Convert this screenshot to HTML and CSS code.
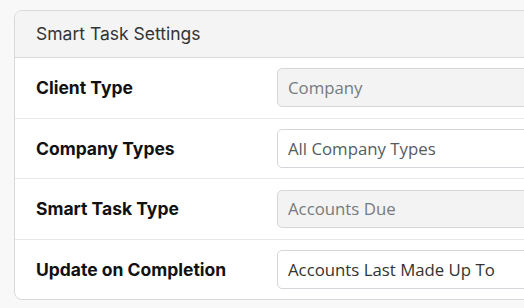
FILE: index.html
```html
<!DOCTYPE html>
<html lang="en">

<head>
    <meta charset="UTF-8">
    <meta name="viewport" content="width=device-width, initial-scale=1.0">
    <title>Smart Task Settings</title>
    <link rel="stylesheet" href="styles.css">
</head>

<body>
    <section class="settings-card">
        <div class="card-header">Smart Task Settings</div>
        <div class="setting-row">
            <label for="client-type">Client Type</label>
            <input type="text" id="client-type" value="Company" class="fixed-input" readonly>
        </div>
        <div class="setting-row">
            <label for="company-types">Company Types</label>
            <input type="text" id="company-types" placeholder="All Company Types">
        </div>
        <div class="setting-row">
            <label for="task-type">Smart Task Type</label>
            <input type="text" id="task-type" value="Accounts Due" class="fixed-input" readonly>
        </div>
        <div class="setting-row">
            <label for="update-field">Update on Completion</label>
            <input type="text" id="update-field" value="Accounts Last Made Up To">
        </div>
    </section>
</body>

</html>
```

FILE: styles.css
```css
body {
    margin: 0;
    padding: 10px 0 0 14px;
    background-color: #f8f8f8;
    font-family: Inter, "Liberation Sans", sans-serif;
    overflow: hidden;
}

.settings-card {
    width: 600px;
    background-color: #ffffff;
    border: 1px solid #d9d9d9;
    border-radius: 8px;
    overflow: hidden;
}

.card-header {
    background-color: #f4f4f4;
    color: #333333;
    font-size: 17.5px;
    padding: 0 21px;
    height: 46px;
    line-height: 46px;
    border-bottom: 1px solid #d9d9d9;
}

.setting-row {
    display: grid;
    grid-template-columns: 221px 1fr;
    column-gap: 20px;
    align-items: center;
    padding: 10.4px 21px;
    border-bottom: 1px solid #e6e8eb;
}

.setting-row:last-child {
    border-bottom: none;
}

.setting-row label {
    font-weight: 700;
    font-size: 17.5px;
    color: #111111;
}

.setting-row input {
    font-family: "Open Sans", sans-serif;
    font-size: 16.8px;
    height: 38.8px;
    padding: 0 10px;
    border: 1px solid #d3d6da;
    border-radius: 5px;
    color: #333333;
    background-color: #ffffff;
    box-sizing: border-box;
    width: 100%;
}

.setting-row input::placeholder {
    color: #555b61;
}

.setting-row .fixed-input {
    background-color: #f3f3f3;
    color: #757b80;
}
```
